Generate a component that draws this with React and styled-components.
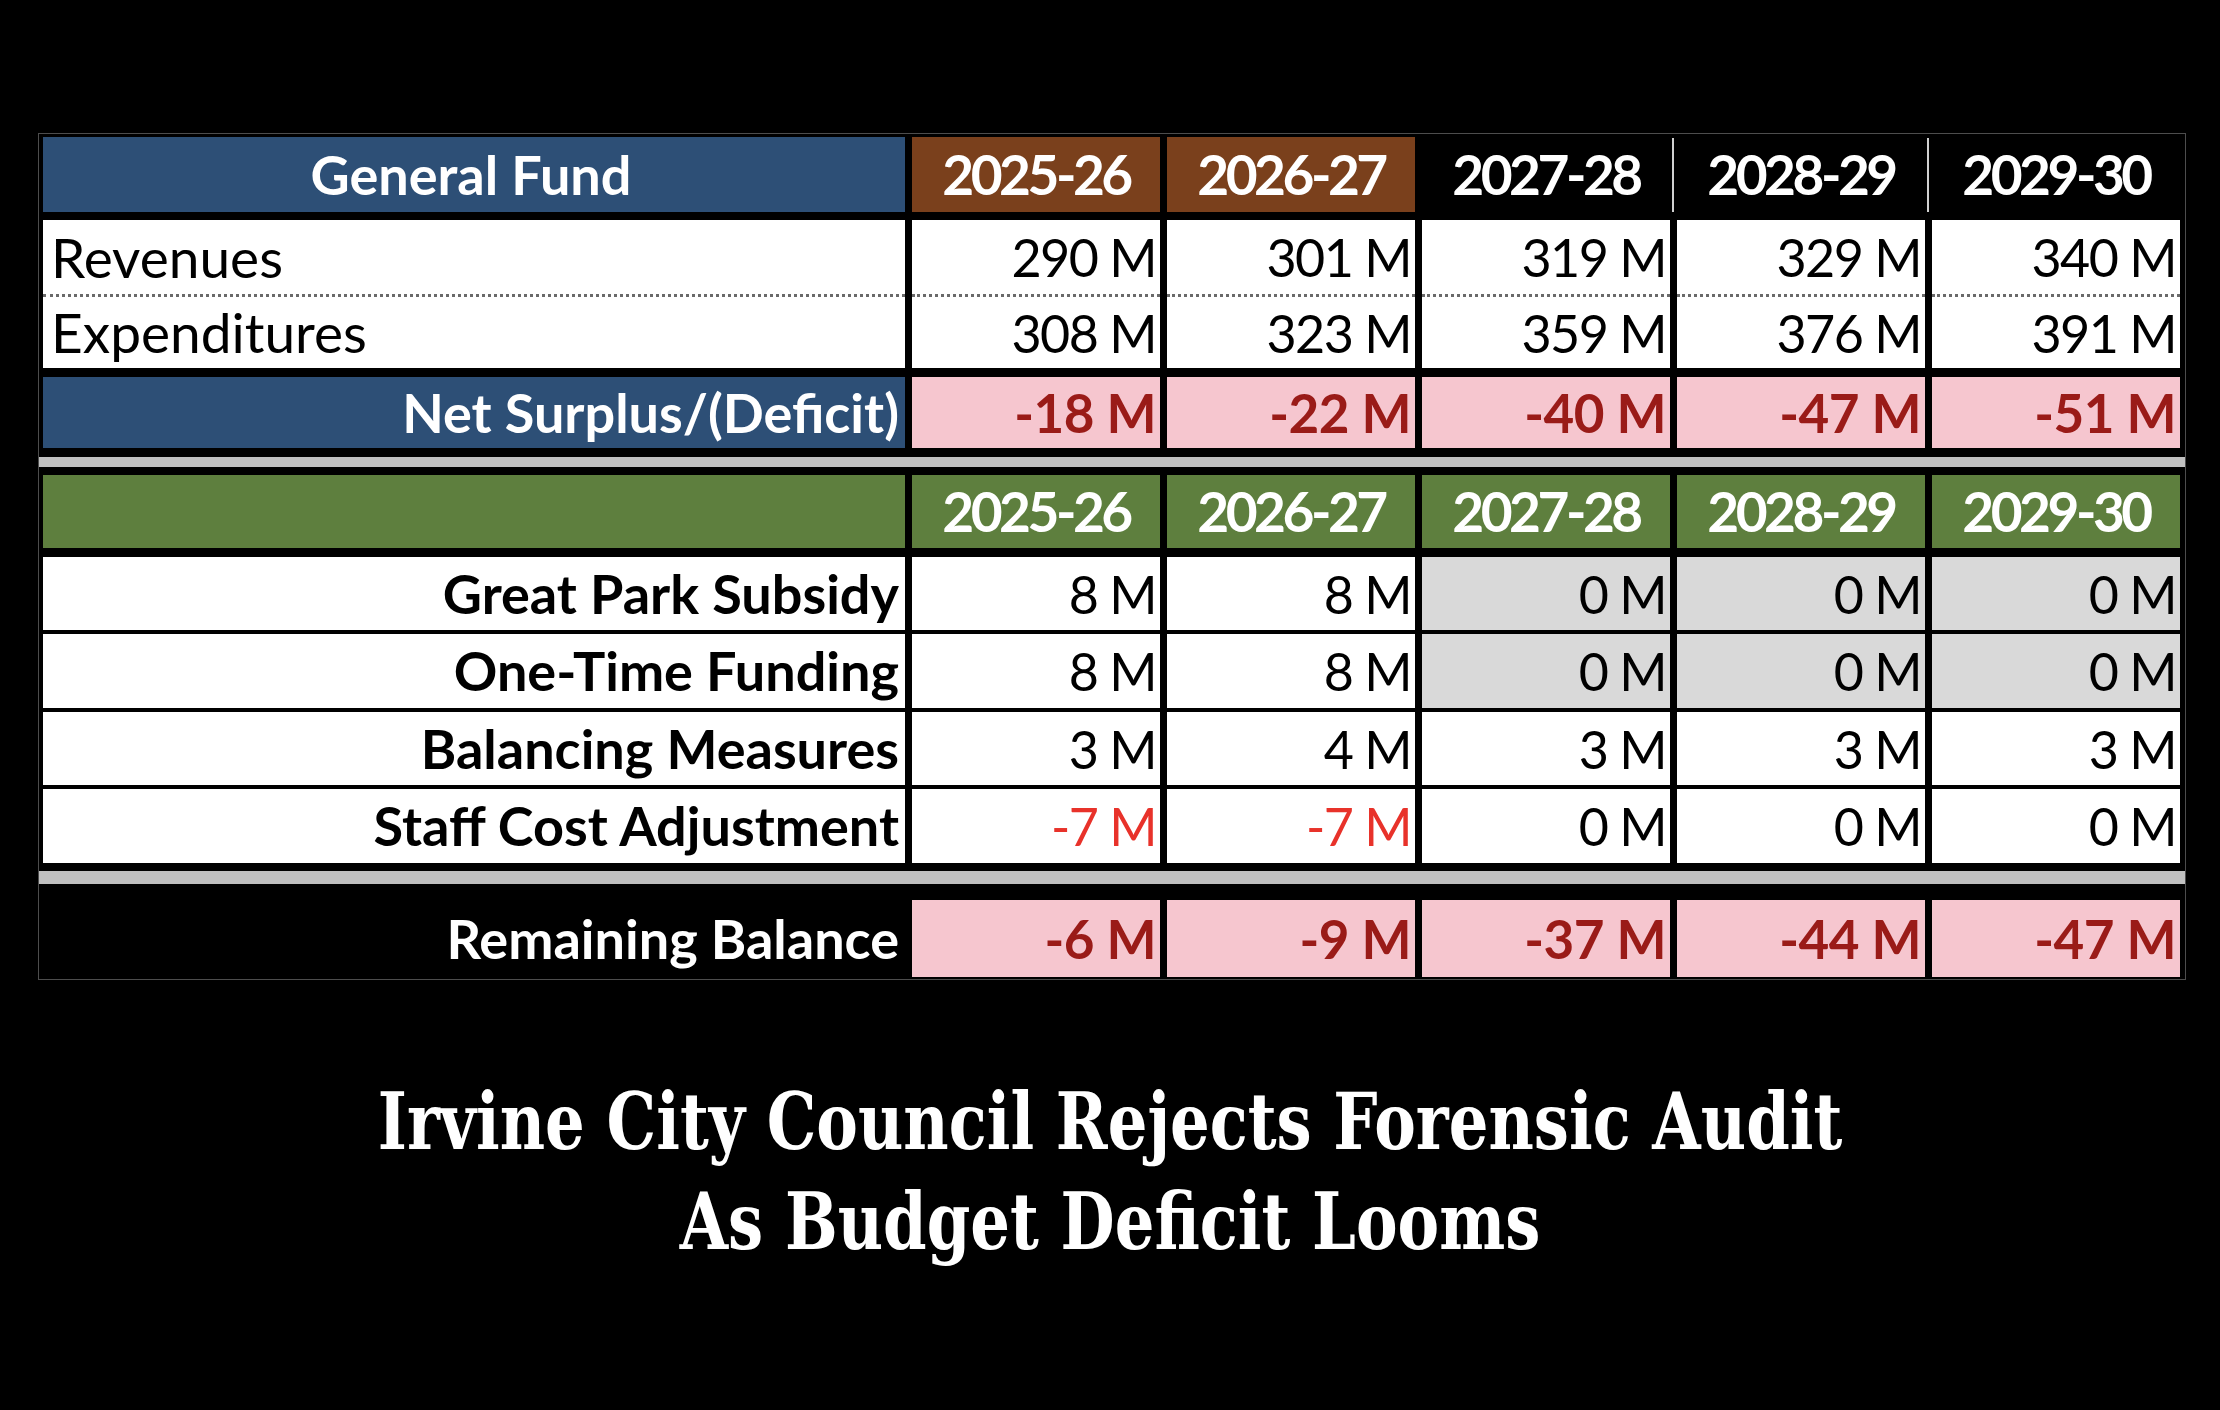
import React from "react";
import styled, { createGlobalStyle } from "styled-components";

const GlobalStyle = createGlobalStyle`
  html, body {
    margin: 0;
    padding: 0;
    background: #000;
  }
`;

const YEARS = ["2025-26", "2026-27", "2027-28", "2028-29", "2029-30"];

const TOP_ROWS = [
  { label: "Revenues", values: ["290 M", "301 M", "319 M", "329 M", "340 M"], dotted: true, h: 77 },
  { label: "Expenditures", values: ["308 M", "323 M", "359 M", "376 M", "391 M"], h: 71 },
];

const NET = ["-18 M", "-22 M", "-40 M", "-47 M", "-51 M"];

// shaded = columns drawn grey, red = columns with a negative adjustment
const LOWER_ROWS = [
  { label: "Great Park Subsidy", values: ["8 M", "8 M", "0 M", "0 M", "0 M"], shaded: [2, 3, 4], h: 73 },
  { label: "One-Time Funding", values: ["8 M", "8 M", "0 M", "0 M", "0 M"], shaded: [2, 3, 4], h: 74 },
  { label: "Balancing Measures", values: ["3 M", "4 M", "3 M", "3 M", "3 M"], h: 73 },
  { label: "Staff Cost Adjustment", values: ["-7 M", "-7 M", "0 M", "0 M", "0 M"], red: [0, 1], h: 74 },
];

const REMAINING = ["-6 M", "-9 M", "-37 M", "-44 M", "-47 M"];

function App() {
  return (
    <Page>
      <GlobalStyle />
      <Table>
        <Row h={75} mt={3}>
          <Cell bg="#2d4f76" color="#fff" bold align="center">
            General Fund
          </Cell>
          {YEARS.map((y, i) => (
            <YearCell key={y} bg={i < 2 ? "#7a401c" : "transparent"} sep={i > 2}>
              {y}
            </YearCell>
          ))}
        </Row>

        {TOP_ROWS.map((r, idx) => (
          <Row key={r.label} h={r.h} mt={idx === 0 ? 8 : 0}>
            <Cell bg="#fff" align="left" dotted={r.dotted}>
              {r.label}
            </Cell>
            {r.values.map((v, i) => (
              <ValueCell key={i} bg="#fff" dotted={r.dotted}>
                {v}
              </ValueCell>
            ))}
          </Row>
        ))}

        <Row h={71} mt={9}>
          <Cell bg="#2d4f76" color="#fff" bold align="right">
            Net Surplus/(Deficit)
          </Cell>
          {NET.map((v, i) => (
            <ValueCell key={i} bg="#f6c6cf" color="#9a1b18" bold>
              {v}
            </ValueCell>
          ))}
        </Row>

        <Divider mt={9} h={10} />

        <Row h={73} mt={8}>
          <Cell bg="#5e7f3e" />
          {YEARS.map((y) => (
            <YearCell key={y} bg="#5e7f3e">
              {y}
            </YearCell>
          ))}
        </Row>

        {LOWER_ROWS.map((r, idx) => (
          <Row key={r.label} h={r.h} mt={idx === 0 ? 9 : 4}>
            <Cell bg="#fff" bold align="right">
              {r.label}
            </Cell>
            {r.values.map((v, i) => (
              <ValueCell
                key={i}
                bg={r.shaded && r.shaded.includes(i) ? "#d9d9d9" : "#fff"}
                color={r.red && r.red.includes(i) ? "#e8322a" : "#000"}
              >
                {v}
              </ValueCell>
            ))}
          </Row>
        ))}

        <Divider mt={8} h={13} />

        <Row h={77} mt={16}>
          <Cell bg="#000" color="#fff" bold align="right">
            Remaining Balance
          </Cell>
          {REMAINING.map((v, i) => (
            <ValueCell key={i} bg="#f6c6cf" color="#9a1b18" bold>
              {v}
            </ValueCell>
          ))}
        </Row>
      </Table>

      <Headline>
        Irvine City Council Rejects Forensic Audit
        <br />
        As Budget Deficit Looms
      </Headline>
    </Page>
  );
}

export default App;

const Page = styled.div`
  width: 2220px;
  height: 1410px;
  background: #000;
  overflow: hidden;
  padding-top: 133px;
  box-sizing: border-box;
`;

const Table = styled.div`
  width: 2148px;
  margin-left: 38px;
  border: 1px solid #4d4d4d;
  box-sizing: border-box;
  background: #000;
  padding-bottom: 2px;
  font-family: Lato, "Open Sans", sans-serif;
`;

const Row = styled.div`
  display: grid;
  grid-template-columns: 862px repeat(5, 248px);
  column-gap: 7px;
  height: ${(p) => p.h}px;
  margin-top: ${(p) => p.mt || 0}px;
  padding: 0 5px 0 4px;
`;

const Divider = styled.div`
  height: ${(p) => p.h}px;
  margin-top: ${(p) => p.mt}px;
  background: #c0c0c0;
`;

const Cell = styled.div`
  position: relative;
  display: flex;
  align-items: center;
  justify-content: ${(p) =>
    p.align === "center" ? "center" : p.align === "right" ? "flex-end" : "flex-start"};
  padding: ${(p) => (p.align === "left" ? "0 0 0 8px" : "0 6px 0 0")};
  background: ${(p) => p.bg || "#fff"};
  color: ${(p) => p.color || "#000"};
  font-size: ${(p) => (p.bold ? 54 : 55)}px;
  line-height: 1;
  font-weight: ${(p) => (p.bold ? 700 : 400)};
  white-space: nowrap;
  border-bottom: ${(p) => (p.dotted ? "3px dotted #6a6a6a" : "none")};
  box-sizing: border-box;
`;

const ValueCell = styled(Cell)`
  justify-content: flex-end;
  padding: 0 4px 0 0;
  font-size: ${(p) => (p.bold ? 53 : 52)}px;
  letter-spacing: ${(p) => (p.bold ? "-0.5px" : "-1.5px")};
`;

const YearCell = styled.div`
  position: relative;
  display: flex;
  align-items: center;
  justify-content: center;
  background: ${(p) => p.bg};
  color: #fff;
  font-size: 55px;
  font-weight: 700;
  letter-spacing: -3.5px;
  line-height: 1;

  &::before {
    content: "";
    display: ${(p) => (p.sep ? "block" : "none")};
    position: absolute;
    left: -5px;
    top: 1px;
    bottom: 0;
    width: 2px;
    background: #d0d0d0;
  }
`;

const Headline = styled.h1`
  margin: 92px 0 0;
  font-family: "DejaVu Serif", "Liberation Serif", serif;
  font-weight: 700;
  font-size: 78px;
  line-height: 100px;
  color: #fff;
  text-align: center;
  transform: scaleX(0.8);
`;
